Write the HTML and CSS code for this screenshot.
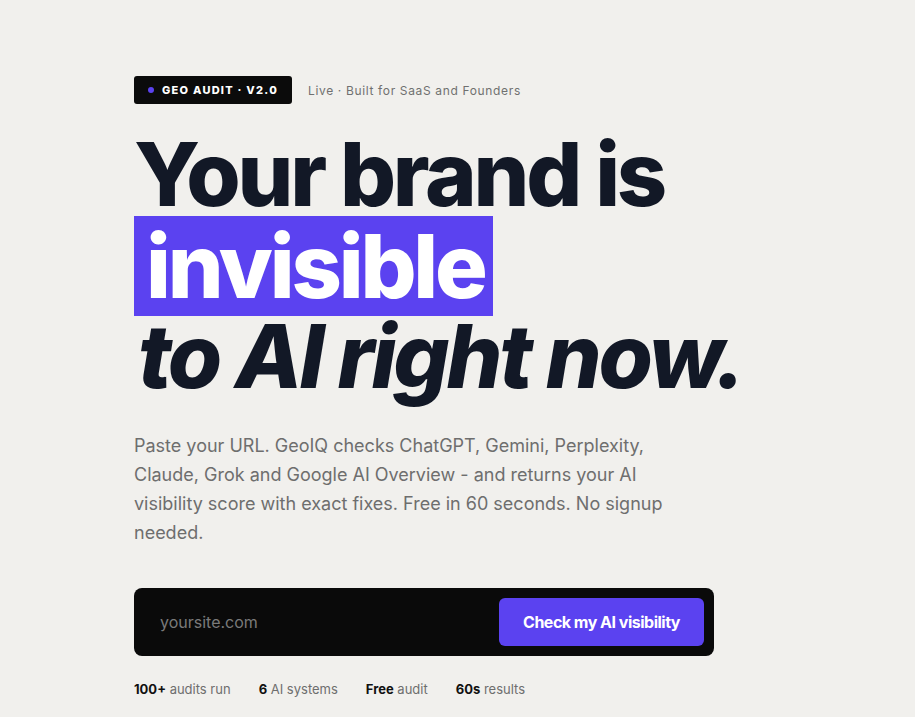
FILE: index.html
```html
<!DOCTYPE html>
<html lang="en">
<head>
<meta charset="utf-8">
<title>GeoIQ - AI visibility audit</title>
<link rel="stylesheet" href="styles.css">
</head>
<body>

<main class="hero">
  <div class="eyebrow">
    <span class="tag"><span class="tag-dot"></span>GEO AUDIT · V2.0</span>
    <span class="eyebrow-note">Live · Built for SaaS and Founders</span>
  </div>

  <h1 class="headline">
    <span class="line first">Your brand is</span>
    <span class="line middle"><span class="mark">invisible</span></span>
    <span class="line italic">to AI right now.</span>
  </h1>

  <p class="lede">Paste your URL. GeoIQ checks ChatGPT, Gemini, Perplexity, Claude, Grok and Google AI Overview - and returns your AI visibility score with exact fixes. Free in 60 seconds. No signup needed.</p>

  <form class="audit-form" onsubmit="return false">
    <input class="audit-input" type="text" placeholder="yoursite.com">
    <button class="audit-btn" type="submit">Check my AI visibility</button>
  </form>

  <ul class="stats">
    <li><b>100+</b> audits run</li>
    <li><b>6</b> AI systems</li>
    <li><b>Free</b> audit</li>
    <li><b>60s</b> results</li>
  </ul>
</main>

</body>
</html>
```

FILE: styles.css
```css
html, body {
  margin: 0;
  padding: 0;
}

body {
  background: #f1f0ed;
  font-family: Inter, "Noto Sans", sans-serif;
  color: #111827;
}

.hero {
  padding: 76px 0 0 134px;
  width: 640px;
}

/* badge + note */
.eyebrow {
  display: flex;
  align-items: center;
  gap: 16px;
}

.tag {
  display: inline-flex;
  align-items: center;
  gap: 8px;
  height: 28px;
  padding: 0 14px 0 14px;
  background: #0b0b0b;
  color: #fff;
  border-radius: 3px;
  font-size: 11px;
  font-weight: 800;
  letter-spacing: 1.25px;
}

.tag-dot {
  width: 6px;
  height: 6px;
  border-radius: 50%;
  background: #5b42f0;
}

.eyebrow-note {
  font-size: 12px;
  color: #707070;
  letter-spacing: 0.65px;
}

/* big headline */
.headline {
  margin: 28px 0 0 0;
  font-size: 88px;
  font-weight: 800;
  letter-spacing: -3.2px;
  color: #121826;
}

.headline .line {
  display: block;
}

.headline .first {
  line-height: 84px;
}

.headline .middle {
  line-height: 100px;
  height: 100px;
}

.headline .mark {
  display: inline-block;
  background: #5b42f0;
  color: #fff;
  padding: 0 8px 0 12px;
}

.headline .italic {
  font-style: italic;
  line-height: 80px;
  margin-left: 4px;
}

/* description */
.lede {
  margin: 35px 0 0 0;
  width: 540px;
  font-size: 18px;
  line-height: 29px;
  color: #6e6e6e;
}

/* url form */
.audit-form {
  display: flex;
  align-items: center;
  justify-content: space-between;
  width: 580px;
  height: 68px;
  margin-top: 41px;
  padding: 0 10px 0 26px;
  box-sizing: border-box;
  background: #0a0a0a;
  border-radius: 8px;
}

.audit-input {
  flex: 1;
  padding: 0;
  background: transparent;
  border: 0;
  outline: none;
  font-family: inherit;
  font-size: 16px;
  color: #fff;
}

.audit-input::placeholder {
  color: #7a7a7a;
}

.audit-btn {
  height: 48px;
  padding: 0 24px;
  background: #5b42f0;
  color: #fff;
  border: 0;
  border-radius: 6px;
  font-family: inherit;
  font-size: 16px;
  font-weight: 700;
  letter-spacing: -0.5px;
}

/* numbers under the form */
.stats {
  display: flex;
  gap: 28px;
  list-style: none;
  margin: 25px 0 0 0;
  padding: 0;
  font-size: 13px;
  color: #6e6e6e;
}

.stats b {
  color: #111;
  font-weight: 700;
}
```
